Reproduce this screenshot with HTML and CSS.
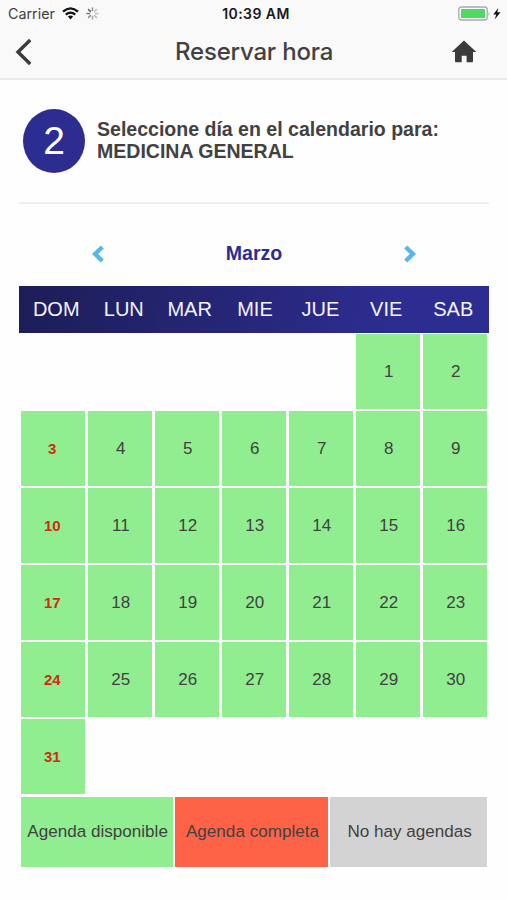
FILE: index.html
```html
<!DOCTYPE html>
<html lang="es">
<head>
<meta charset="utf-8">
<title>Reservar hora</title>
<link rel="stylesheet" href="styles.css">
</head>
<body>
<header class="top">
  <div class="status">
    <div class="status-left">
      <span>Carrier</span>
      <svg class="wifi" width="17" height="13" viewBox="0 0 17 13" fill="none" stroke="#111" stroke-width="2.3"><path d="M1 4.6Q8.5-1.8 16 4.6M3.8 7.6Q8.5 3.6 13.2 7.6"/><path d="M5.9 9.6Q8.5 7.6 11.1 9.6L8.5 12.4Z" fill="#111" stroke="none"/></svg>
      <svg class="spinner" width="13" height="13" viewBox="0 0 13 13" stroke="#666" stroke-width="1.6" stroke-linecap="round"><path d="M6.5 1v2.5" opacity=".7"/><path d="M10.4 2.6 8.6 4.4" opacity=".35"/><path d="M12 6.5H9.5" opacity=".35"/><path d="M10.4 10.4 8.6 8.6" opacity=".4"/><path d="M6.5 12V9.5" opacity=".5"/><path d="M2.6 10.4 4.4 8.6" opacity=".7"/><path d="M1 6.5H3.5" opacity=".9"/><path d="M2.6 2.6 4.4 4.4"/></svg>
    </div>
    <span class="clock">10:39 AM</span>
    <div class="status-right">
      <svg width="46" height="16" viewBox="0 0 46 16"><rect x=".8" y="1" width="28.4" height="13" rx="2.8" fill="#fafafa" stroke="#aaa" stroke-width="1.3"/><rect x="3" y="3" width="24" height="9" rx=".6" fill="#4cd964"/><path d="M30.5 5.5q1.8 2 0 4z" fill="#aaa"/><path d="M40.2 2 35.3 8.4h3l-1.6 5 5.8-7.1h-3.2z" fill="#111"/></svg>
    </div>
  </div>
  <div class="nav">
    <svg width="18" height="28" viewBox="0 0 18 28" fill="none" stroke="#3b3b3b" stroke-width="3.4"><path d="M15.2 2 3 14l12.2 12"/></svg>
    <h1>Reservar hora</h1>
    <svg width="26" height="23" viewBox="0 0 26 23" fill="#3b3b3b"><path d="M13 .5 25.3 12H22v9.2q0 1-1 1h-5.4v-6.4h-4.9v6.4H5q-1 0-1-1V12H.7z"/></svg>
  </div>
</header>
<main>
  <section class="step">
    <div class="number">2</div>
    <h2><span class="prompt">Seleccione día en el calendario para:</span><br><span class="specialty">MEDICINA GENERAL</span></h2>
  </section>
  <div class="month">
    <svg width="14" height="18" viewBox="0 0 14 18" fill="none" stroke="#55b8e8" stroke-width="4.4"><path d="M11.3 2 4.1 9l7.2 7"/></svg>
    <strong>Marzo</strong>
    <svg width="14" height="18" viewBox="0 0 14 18" fill="none" stroke="#55b8e8" stroke-width="4.4"><path d="m2.7 2 7.2 7-7.2 7"/></svg>
  </div>
  <div class="weekdays"><span>DOM</span><span>LUN</span><span>MAR</span><span>MIE</span><span>JUE</span><span>VIE</span><span>SAB</span></div>
  <div class="days">
    <span class="first">1</span><span>2</span>
    <span>3</span><span>4</span><span>5</span><span>6</span><span>7</span><span>8</span><span>9</span>
    <span>10</span><span>11</span><span>12</span><span>13</span><span>14</span><span>15</span><span>16</span>
    <span>17</span><span>18</span><span>19</span><span>20</span><span>21</span><span>22</span><span>23</span>
    <span>24</span><span>25</span><span>26</span><span>27</span><span>28</span><span>29</span><span>30</span>
    <span>31</span>
  </div>
  <div class="legend"><span class="free">Agenda disponible</span><span class="full">Agenda completa</span><span class="none">No hay agendas</span></div>
</main>
</body>
</html>
```
FILE: styles.css
```css
* { box-sizing: border-box; }
body {
  margin: 0;
  min-height: 900px;
  background: #fefefe;
  color: #414141;
  font-family: "Liberation Sans", Arial, sans-serif;
}
svg { display: block; flex: none; }
.top {
  height: 80px;
  background: #f9f9f9;
  border-bottom: 2px solid #e9e9e9;
  font-family: Inter, sans-serif;
}
.status {
  display: grid;
  grid-template-columns: 1fr auto 1fr;
  align-items: center;
  height: 27px;
  padding: 0 3px 0 8px;
  font-size: 14.3px;
}
.status-left { display: flex; align-items: center; }
.wifi { margin-left: 7px; }
.spinner { margin-left: 7px; }
.status-right { display: flex; justify-content: flex-end; }
.clock {
  color: #181818;
  font-size: 14px;
  font-weight: 600;
  letter-spacing: .45px;
}
.nav {
  display: flex;
  align-items: center;
  height: 49px;
  padding: 0 30px 0 15px;
}
h1 {
  margin: 0 auto 0 142px;
  font-size: 24px;
  font-weight: 500;
  letter-spacing: -.2px;
}
main { padding: 0 18px 0 19px; }
.step {
  display: flex;
  height: 124px;
  padding: 29px 0 0 4px;
  border-bottom: 2px solid #eee;
}
.number {
  display: flex;
  align-items: center;
  justify-content: center;
  width: 62px;
  height: 64px;
  border-radius: 50%;
  background: #2d2d91;
  color: #fff;
  font-size: 39px;
}
h2 {
  margin: 9px 0 0 12px;
  font-size: 19.55px;
  line-height: 22px;
  white-space: nowrap;
}
.month {
  display: flex;
  align-items: center;
  justify-content: space-between;
  height: 82px;
  padding: 17px 72px 0;
  color: #2d2d91;
  font-size: 19.6px;
}
.weekdays {
  display: grid;
  grid-template-columns: 72.6fr 62.8fr 69.2fr 61.8fr 69.2fr 62.8fr 71.6fr;
  align-items: center;
  height: 47px;
  padding-left: 1px;
  background: linear-gradient(100deg, #1d1d58, #2d2d91 80%);
  color: #f4f4ff;
  font-size: 20px;
  text-align: center;
}
.days {
  display: grid;
  grid-template-columns: repeat(7, 64.4px);
  grid-auto-rows: 74.5px;
  gap: 2.6px;
  padding: 1px 0 0 1.6px;
}
.days span {
  display: flex;
  align-items: center;
  justify-content: center;
  padding: 1px 0 0 2px;
  background: #90ee90;
  font-size: 17px;
}
.days .first { grid-column: 6; }
.days span:nth-child(7n + 3) {
  padding: 0 1px 0 0;
  color: #d32a12;
  font-size: 15px;
  font-weight: bold;
}
.legend {
  display: grid;
  grid-template-columns: 152px 152.4px 156.6px;
  gap: 2.7px;
  height: 70.5px;
  margin: 2.6px 0 0 1.6px;
  font-size: 17.1px;
}
.legend span {
  display: flex;
  align-items: center;
  justify-content: center;
  padding: 1px 0 0 2px;
  white-space: nowrap;
}
.free { background: #90ee90; }
.full { background: #ff6347; }
.none { background: #d3d3d3; }
```
